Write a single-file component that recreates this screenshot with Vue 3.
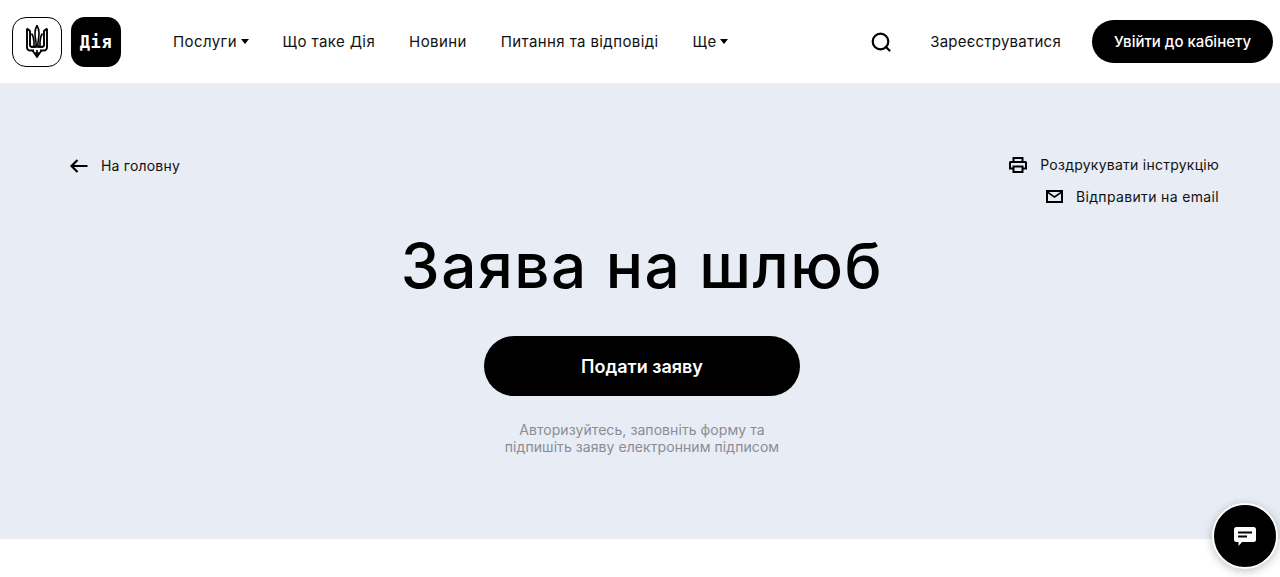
<script setup>
const navItems = [
  { label: 'Послуги', caret: true },
  { label: 'Що таке Дія' },
  { label: 'Новини' },
  { label: 'Питання та відповіді' },
  { label: 'Ще', caret: true },
]
</script>

<template>
  <div class="page">
    <header class="top">
      <div class="logos">
        <a class="logo logo--gerb">
          <svg width="22" height="33" viewBox="0 0 22 33" fill="none" stroke="#000" stroke-width="1.600">
            <path d="M11 .5C9.500 3 9 5 9 8c0 5 1.200 8 1.200 13M11 .5C12.500 3 13 5 13 8c0 5-1.200 8-1.200 13" />
            <path d="M1 3.500l3 2.500v14c0 1 .7 1.800 1.800 1.800H9c.8 0 1.200-.5 1.200-1.500M1 3.500V22c0 2.500 1.500 3.500 3.500 3.500H8" stroke-width="1.900" />
            <path d="M21 3.500L18 6v14c0 1-.7 1.800-1.800 1.800H13c-.8 0-1.200-.5-1.200-1.500M21 3.500V22c0 2.500-1.500 3.500-3.500 3.500H14" stroke-width="1.900" />
            <path d="M5.500 8.500C7.500 11 8 14 8 17v4.500M16.500 8.500C14.500 11 14 14 14 17v4.500" />
            <path d="M6.500 25.500L11 32l4.500-6.500M11 25v7M8 28h6M5 22h12" stroke-width="1.700" />
          </svg>
        </a>
        <a class="logo logo--dia">Дія</a>
      </div>

      <nav class="nav">
        <a v-for="item in navItems" :key="item.label" class="nav-link">
          {{ item.label }}<i v-if="item.caret" class="caret"></i>
        </a>
      </nav>

      <div class="top-right">
        <svg class="search" width="20" height="20" viewBox="0 0 20 20" fill="none" stroke="#000" stroke-width="2.200">
          <circle cx="9.500" cy="9.500" r="7.800" />
          <path d="M15 15l3.500 3.500" stroke-linecap="round" />
        </svg>
        <a class="register">Зареєструватися</a>
        <a class="login">Увійти до кабінету</a>
      </div>
    </header>

    <main class="hero">
      <div class="hero-top">
        <a class="back">
          <svg width="18" height="14" viewBox="0 0 18 14" fill="none" stroke="#000" stroke-width="2.200">
            <path d="M17.500 7H2M7.500 1L1.500 7l6 6" />
          </svg>
          На головну
        </a>
        <div class="actions">
          <a class="action">
            <svg width="18" height="16" viewBox="0 0 18 16">
              <path fill-rule="evenodd" d="M3.500 0h11v4h2A1.500 1.500 0 0 1 18 5.500V12.500h-3.500V16h-11v-3.500H0V5.500A1.500 1.500 0 0 1 1.500 4h2V0zm2 2v2h7V2h-7zM2 6v4.500h1.500V8.500h11v2H16V6H2zm3.500 4.500V14h7v-3.500h-7z" />
            </svg>
            Роздрукувати інструкцію
          </a>
          <a class="action action--mail">
            <svg width="17" height="13" viewBox="0 0 17 13">
              <path fill-rule="evenodd" d="M0 0h17v13H0V0zm2.800 2L8.500 6l5.700-4H2.800zM15 3.500L8.500 8 2 3.500V11h13V3.500z" />
            </svg>
            Відправити на email
          </a>
        </div>
      </div>

      <h1 class="title">Заява на шлюб</h1>
      <a class="submit">Подати заяву</a>
      <p class="note">Авторизуйтесь, заповніть форму та<br />підпишіть заяву електронним підписом</p>
    </main>

    <div class="bottom"></div>

    <button class="chat">
      <svg width="22" height="19" viewBox="0 0 22 19">
        <path fill-rule="evenodd" d="M2.500 0h17A2.500 2.500 0 0 1 22 2.500v10a2.500 2.500 0 0 1-2.500 2.500H8l-3.500 4v-4h-2A2.500 2.500 0 0 1 0 12.500v-10A2.500 2.500 0 0 1 2.500 0zM4 4.500v2h14v-2H4zm0 4v2h9v-2H4z" fill="#fff" />
      </svg>
    </button>
  </div>
</template>

<style>
html, body { margin: 0; background: #fff; }
</style>

<style scoped>
.page {
  position: relative;
  height: 577px;
  overflow: hidden;
  font-family: Inter, "Liberation Sans", sans-serif;
  color: #000;
}

.top {
  display: flex;
  align-items: center;
  height: 83px;
  padding: 0 7px 0 12px;
  box-sizing: border-box;
}

.logos { display: flex; gap: 9px; }

.logo {
  width: 50px;
  height: 50px;
  box-sizing: border-box;
  border-radius: 14px;
  display: flex;
  align-items: center;
  justify-content: center;
}

.logo--gerb { border: 1px solid #000; }

.logo--dia {
  background: #000;
  color: #fff;
  font-family: "DejaVu Sans Mono", monospace;
  font-size: 17px;
  font-weight: 700;
  letter-spacing: 0.6px;
}

.nav {
  display: flex;
  gap: 34px;
  margin-left: 52px;
}

.nav-link {
  display: flex;
  align-items: center;
  font-size: 15px;
  letter-spacing: 0.4px;
  color: #111;
}

.caret {
  width: 0;
  height: 0;
  margin-left: 3.500px;
  border-left: 4.500px solid transparent;
  border-right: 4.500px solid transparent;
  border-top: 5px solid #000;
}

.top-right {
  display: flex;
  align-items: center;
  margin-left: auto;
}

.search { margin-right: 39px; }

.register {
  font-size: 15px;
  letter-spacing: 0.25px;
  margin-right: 31px;
  color: #111;
}

.login {
  display: flex;
  align-items: center;
  justify-content: center;
  width: 181px;
  height: 43px;
  border-radius: 22px;
  background: #000;
  color: #fff;
  font-size: 15px;
  font-weight: 500;
}

.hero {
  height: 456px;
  background: #e8ecf4;
  padding: 66px 61px 0 70px;
  box-sizing: border-box;
  display: flex;
  flex-direction: column;
  align-items: center;
}

.hero-top {
  align-self: stretch;
  display: flex;
  justify-content: space-between;
  align-items: flex-start;
  height: 78px;
}

.back {
  display: flex;
  align-items: center;
  gap: 13px;
  font-size: 14px;
  letter-spacing: 0.2px;
  margin-top: 8px;
  color: #111;
}

.actions {
  display: flex;
  flex-direction: column;
  align-items: flex-end;
  gap: 15px;
  margin-top: 7px;
}

.action {
  display: flex;
  align-items: center;
  gap: 13px;
  font-size: 14px;
  letter-spacing: 0.25px;
  line-height: 17px;
  color: #111;
}

.action--mail { letter-spacing: 0.35px; }

.title {
  margin: 0 0 0 -5px;
  font-size: 62px;
  font-weight: 500;
  line-height: 78px;
  letter-spacing: 1.5px;
}

.submit {
  margin: 31px 0 0 -5px;
  width: 316px;
  height: 60px;
  border-radius: 30px;
  background: #000;
  color: #fff;
  font-size: 18px;
  font-weight: 600;
  display: flex;
  align-items: center;
  justify-content: center;
}

.note {
  margin: 25px 0 0 -5px;
  font-size: 14px;
  line-height: 17px;
  text-align: center;
  color: #8a8d94;
  letter-spacing: 0.07px;
}

.bottom { height: 38px; }

.chat {
  position: absolute;
  left: 1212px;
  top: 503px;
  width: 66px;
  height: 66px;
  box-sizing: border-box;
  padding: 0;
  border: 2px solid #fff;
  border-radius: 50%;
  background: #000;
  box-shadow: 0 2px 10px rgba(0, 0, 0, 0.25);
  display: flex;
  align-items: center;
  justify-content: center;
}
</style>
